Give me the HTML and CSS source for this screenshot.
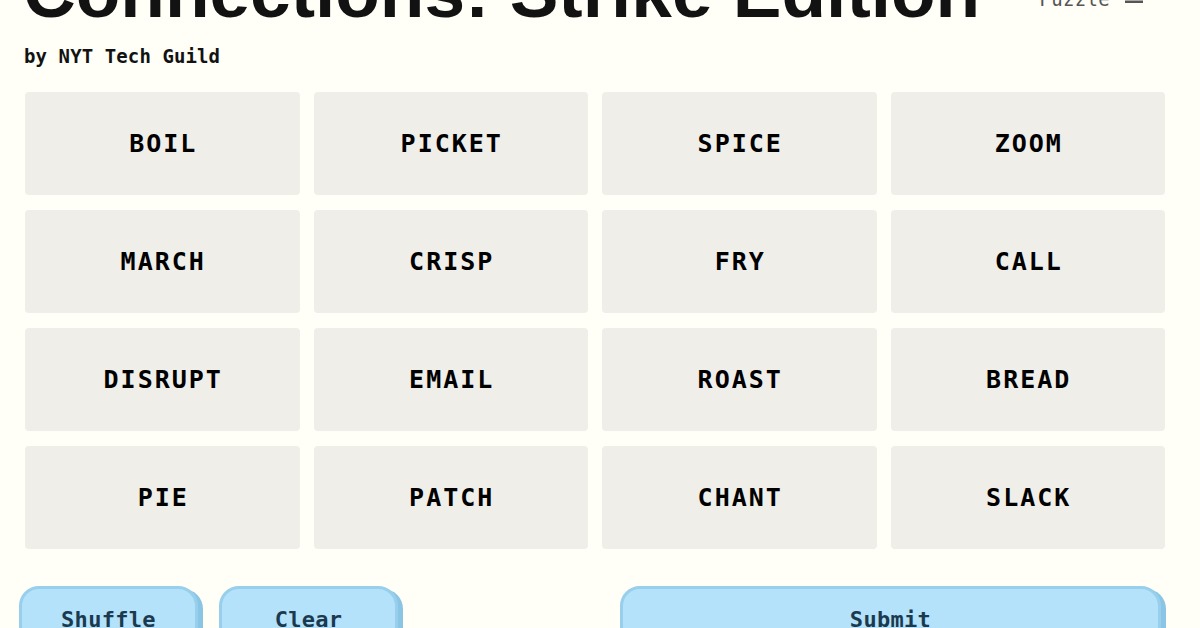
FILE: index.html
```html
<!DOCTYPE html>
<html>
<head>
<meta charset="utf-8">
<link rel="stylesheet" href="styles.css">
</head>
<body>
<div class="page">
  <header class="header">
    <h1 class="title">Connections: Strike Edition</h1>
    <div class="menu">
      <span class="menu-label">Puzzle</span>
      <svg class="menu-icon" width="18" height="14" viewBox="0 0 18 14"><rect x="0" y="0" width="18" height="2.5" fill="#555"/><rect x="0" y="5.5" width="18" height="2.5" fill="#555"/><rect x="0" y="10.5" width="18" height="2.5" fill="#555"/></svg>
    </div>
  </header>
  <p class="byline">by NYT Tech Guild</p>
  <div class="grid">
    <div class="tile">BOIL</div>
    <div class="tile">PICKET</div>
    <div class="tile">SPICE</div>
    <div class="tile">ZOOM</div>
    <div class="tile">MARCH</div>
    <div class="tile">CRISP</div>
    <div class="tile">FRY</div>
    <div class="tile">CALL</div>
    <div class="tile">DISRUPT</div>
    <div class="tile">EMAIL</div>
    <div class="tile">ROAST</div>
    <div class="tile">BREAD</div>
    <div class="tile">PIE</div>
    <div class="tile">PATCH</div>
    <div class="tile">CHANT</div>
    <div class="tile">SLACK</div>
  </div>
  <div class="actions">
    <button class="btn btn-small">Shuffle</button>
    <button class="btn btn-small">Clear</button>
    <button class="btn btn-submit">Submit</button>
  </div>
</div>
</body>
</html>
```
FILE: styles.css
```css
html, body {
  margin: 0;
  padding: 0;
  background: #fffef7;
  overflow: hidden;
}
.page {
  width: 1200px;
  height: 628px;
  padding: 0 35px 0 25px;
  box-sizing: border-box;
}
.header {
  display: flex;
  justify-content: space-between;
  align-items: flex-start;
}
.title {
  margin: -45px 0 0 -2px;
  font-family: "Liberation Sans", Arial, sans-serif;
  font-weight: 700;
  font-size: 73px;
  line-height: 73px;
  letter-spacing: 0;
  color: #121212;
}
.menu {
  display: flex;
  align-items: flex-start;
  gap: 15px;
  margin-top: -10px;
  margin-right: 22px;
}
.menu-label {
  font-family: "DejaVu Sans Mono", monospace;
  font-size: 19px;
  line-height: 19px;
  color: #555;
  letter-spacing: 0.3px;
}
.menu-icon {
  display: block;
}
.byline {
  margin: 19px 0 0 -1px;
  font-family: "DejaVu Sans Mono", monospace;
  font-weight: 700;
  font-size: 19px;
  line-height: 19px;
  letter-spacing: 0.1px;
  color: #121212;
}
.grid {
  margin-top: 26px;
  display: grid;
  grid-template-columns: repeat(4, 1fr);
  grid-auto-rows: 103px;
  column-gap: 14px;
  row-gap: 15px;
}
.tile {
  background: #efeee9;
  border-radius: 4px;
  display: flex;
  align-items: center;
  justify-content: center;
  font-family: "DejaVu Sans Mono", monospace;
  font-weight: 700;
  font-size: 25px;
  letter-spacing: 2px;
  color: #000;
  padding-left: 2px;
}
.actions {
  margin: 37px 0 0 -6px;
  display: flex;
  gap: 21px;
}
.btn {
  height: 60px;
  box-sizing: border-box;
  border: 3px solid #98cfec;
  border-radius: 20px;
  background: #b3e2fa;
  box-shadow: 5px 3px 0 #8ac5e6;
  font-family: "DejaVu Sans Mono", monospace;
  font-weight: 700;
  font-size: 22px;
  line-height: 22px;
  letter-spacing: 0.3px;
  color: #1c3a4f;
  padding: 8px 0 0;
  text-align: center;
  align-self: flex-start;
}
.btn-small {
  width: 179px;
}
.btn-submit {
  width: 541px;
  margin-left: auto;
  margin-right: 4px;
}
```
